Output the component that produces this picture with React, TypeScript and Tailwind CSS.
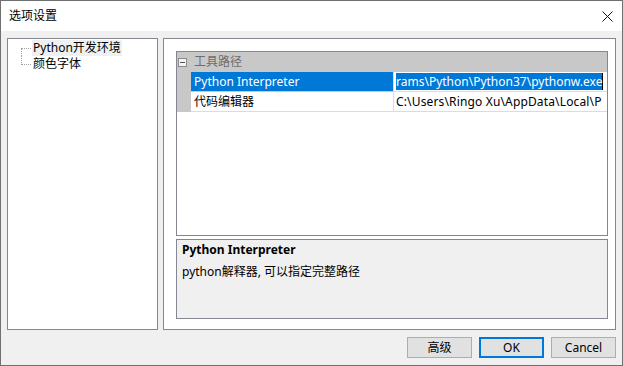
import React from 'react'

const ui = "font-['Noto_Sans','Noto_Sans_CJK_SC',sans-serif] text-[12px]"

function TreePanel() {
  return (
    <div className="w-[151px] shrink-0 h-full border border-[#828790] bg-white pl-[13px] pt-[1px]">
      <div className="flex h-4 items-stretch">
        <div className="w-[10px] h-2 mt-2 border-l border-t border-dotted border-[#a0a0a0]" />
        <div className="ml-[1px] px-[1px] bg-[#f0f0f0] leading-4 text-black whitespace-nowrap">Python开发环境</div>
      </div>
      <div className="flex h-4 items-stretch">
        <div className="w-[10px] h-[9px] border-l border-b border-dotted border-[#a0a0a0]" />
        <div className="ml-[1px] px-[1px] leading-4 text-black whitespace-nowrap">颜色字体</div>
      </div>
    </div>
  )
}

function PropertyGrid() {
  return (
    <div className="w-[432px] h-[185px] border border-[#828790] bg-white flex flex-col overflow-hidden">
      {/* category */}
      <div className="h-5 bg-[#c8c8c8] flex items-center">
        <div className="ml-[1px] w-[9px] h-[9px] border border-[#8a8a8a] bg-[#f4f4f4] flex items-center justify-center">
          <div className="w-[5px] h-[1px] bg-[#555]" />
        </div>
        <span className="ml-[7px] text-[#6d6d6d] leading-5">工具路径</span>
      </div>
      {/* rows */}
      <div className="flex h-5">
        <div className="w-[14px] shrink-0 bg-[#c8c8c8]" />
        <div className="w-[202px] shrink-0 bg-[#0078d7] text-white pl-[3px] leading-5 border-b border-[#c8c8c8]">Python Interpreter</div>
        <div className="w-[214px] shrink-0 border-l border-b border-[#dcdcdc] pl-[2px] py-[1px] overflow-hidden whitespace-nowrap">
          <span className="inline-block bg-[#0078d7] text-white leading-[17px] border-r border-black">rams\Python\Python37\pythonw.exe</span>
        </div>
      </div>
      <div className="flex h-5">
        <div className="w-[14px] shrink-0 bg-[#c8c8c8]" />
        <div className="w-[202px] shrink-0 text-black pl-[3px] leading-[19px] border-b border-[#dcdcdc]">代码编辑器</div>
        <div className="w-[214px] shrink-0 border-l border-b border-[#dcdcdc] pl-[2px] leading-[19px] overflow-hidden whitespace-nowrap text-black tracking-[0.15px]">
          C:\Users\Ringo Xu\AppData\Local\P
        </div>
      </div>
    </div>
  )
}

export default function App() {
  return (
    <div className={`w-[623px] h-[366px] border border-[#707070] flex flex-col ${ui}`}>
      {/* title bar */}
      <div className="h-[30px] bg-white flex items-center justify-between">
        <span className="pl-[8px] text-black">选项设置</span>
        <svg width="11" height="11" viewBox="0 0 11 11" className="mr-[9px]">
          <path d="M0.5 0.5 L10.5 10.5 M10.5 0.5 L0.5 10.5" stroke="#111" strokeWidth="1" />
        </svg>
      </div>

      {/* body */}
      <div className="flex-1 bg-[#f0f0f0] flex flex-col pl-[6px] pr-[6px] pt-[7px]">
        <div className="h-[292px] flex gap-[5px]">
          <TreePanel />
          <div className="w-[453px] shrink-0 border border-[#828790] bg-white pl-[12px] pt-[12px] flex flex-col">
            <PropertyGrid />
            <div className="mt-[3px] w-[432px] h-[80px] border border-[#828790] bg-[#f0f0f0] pl-[5px] text-black">
              <div className="font-bold leading-5">Python Interpreter</div>
              <div className="mt-[2px] leading-5">python解释器, 可以指定完整路径</div>
            </div>
          </div>
        </div>

        {/* buttons */}
        <div className="mt-[7px] flex justify-end gap-[7px]">
          <button className="w-[65px] h-[21px] bg-[#e1e1e1] border border-[#adadad] text-black leading-none">高级</button>
          <button className="w-[65px] h-[21px] bg-[#e1e1e1] border-2 border-[#0078d7] text-black leading-none">OK</button>
          <button className="w-[65px] h-[21px] bg-[#e1e1e1] border border-[#adadad] text-black leading-none">Cancel</button>
        </div>
      </div>
    </div>
  )
}
